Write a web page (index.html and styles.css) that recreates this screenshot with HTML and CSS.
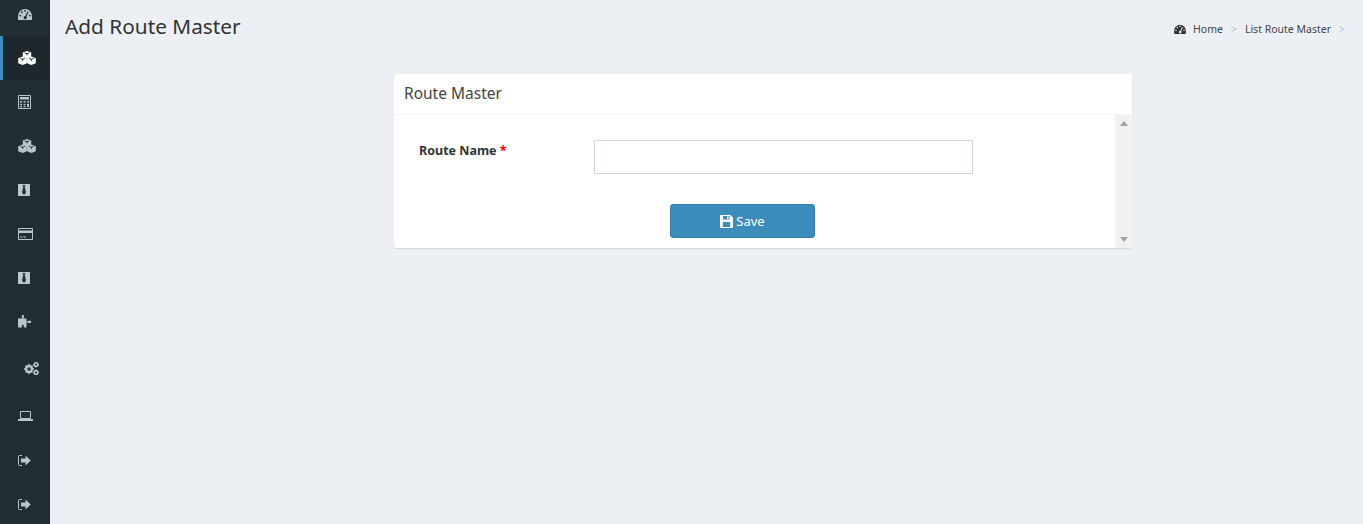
FILE: index.html
```html
<!DOCTYPE html>
<html lang="en">
<head>
<meta charset="utf-8">
<title>Add Route Master</title>
<link rel="stylesheet" href="styles.css">
</head>
<body>
<svg class="defs" width="0" height="0" aria-hidden="true">
  <symbol id="i-gauge" viewBox="0 0 14 12">
    <path fill="currentColor" d="M0 11.2V8a7 7 0 0 1 14 0v3.2a.8.8 0 0 1-.8.8H.8a.8.8 0 0 1-.8-.8z"/>
    <g class="cut"><circle cx="2.2" cy="7.6" r=".9"/><circle cx="3.8" cy="4.2" r=".9"/><circle cx="7" cy="2.8" r=".9"/><circle cx="11.8" cy="7.6" r=".9"/><path d="M9.6 3.4l1 .5-2.2 4.6a1.6 1.6 0 1 1-1.1-.5z"/></g>
  </symbol>
  <symbol id="i-cubes" viewBox="0 0 18 14">
    <g fill="currentColor"><path d="M9 0l4.200 1.500v4.200L9 7.400 4.800 5.700V1.500z"/><path d="M4.600 5.600l4.300 1.600v5.100L4.600 14 .2 12.300V7.200z"/><path d="M13.400 5.600l4.400 1.600v5.100L13.400 14 9.100 12.300V7.200z"/></g>
    <g fill="none" class="cut-line"><path d="M6.700 1.800L9 2.700l2.300-.9M9 2.700v1.600"/><path d="M2.400 7.400l2.200.9 2.200-.9M4.600 8.300v1.600"/><path d="M11.200 7.400l2.200.9 2.200-.9M13.400 8.300v1.600"/></g>
  </symbol>
  <symbol id="i-calc" viewBox="0 0 13 14">
    <path fill="none" stroke="currentColor" d="M.5.500h12v13H.5z"/>
    <path fill="currentColor" d="M2 2h9v2.500H2zM2 6h2v1.500H2zM5.500 6h2v1.500h-2zM9 6h2v1.500H9zM2 8.800h2v1.500H2zM5.500 8.800h2v1.500h-2zM9 8.800h2v3.200H9zM2 11h2v1.200H2zM5.500 11h2v1.200h-2z"/>
  </symbol>
  <symbol id="i-tie" viewBox="0 0 12 12">
    <path fill="currentColor" d="M0 0h12v12H0z"/>
    <path fill="#222d32" d="M4.700 1h2.600L6.700 3 8 8.500 6 11 4 8.500 5.300 3z"/>
  </symbol>
  <symbol id="i-card" viewBox="0 0 15 12">
    <path fill="none" stroke="currentColor" d="M.5.500h14v11H.5z"/>
    <path fill="currentColor" d="M1 2.500h13v2.500H1zM2 8.500h2.500v1H2zM5.500 8.500h2.500v1H5.500z"/>
  </symbol>
  <symbol id="i-puzzle" viewBox="0 0 13 13">
    <path fill="currentColor" d="M3.800 0h2v2.500L5.200 3.500H8.500v3h1.600V5.700H13v2.400H10.100V7.500H8.500v5H5.800V10.800a1 1 0 0 0-2 0v1.700H0V3.500h4.300L3.800 2.500z"/>
  </symbol>
  <symbol id="i-gears" viewBox="0 0 15 13">
    <g fill="none" stroke="currentColor"><circle cx="5" cy="7" r="2.900" stroke-width="2.400"/><circle cx="12" cy="2.600" r="1.800" stroke-width="1.600"/><circle cx="12" cy="10.400" r="1.800" stroke-width="1.600"/></g>
    <path fill="none" stroke="currentColor" stroke-width="1.400" d="M5 1.800V3M5 11v1.200M0 7h1.200M8.800 7H10M1.500 3.500l.8.800M7.700 9.700l.8.800M8.500 3.500l-.8.800M2.300 9.700l-.8.800M12 0v.6M12 4.600v.6M9.500 2.600h.6M14 2.600h.6M12 7.800v.6M12 12.400v.6M9.500 10.400h.6M14 10.400h.6"/>
  </symbol>
  <symbol id="i-laptop" viewBox="0 0 15 10">
    <path fill="none" stroke="currentColor" d="M2.500.500h10v7h-10z"/>
    <path fill="currentColor" d="M0 8h15v1.200a.8.800 0 0 1-.8.800H.8a.8.800 0 0 1-.8-.8z"/>
  </symbol>
  <symbol id="i-out" viewBox="0 0 13 11">
    <path fill="none" stroke="currentColor" d="M4 .500H1.500a1 1 0 0 0-1 1v8a1 1 0 0 0 1 1H4"/>
    <path fill="currentColor" d="M7.500.500L12.800 5.500 7.500 10.500V7.500H3V3.500H7.500z"/>
  </symbol>
  <symbol id="i-save" viewBox="0 0 13 13">
    <path fill="currentColor" fill-rule="evenodd" d="M1 0h9.500L13 2.500V12a1 1 0 0 1-1 1H1a1 1 0 0 1-1-1V1a1 1 0 0 1 1-1zM3 1v3.500h6.500V1zM7 1.500h1.500V4H7zM2.800 7v5h7.400V7z"/>
  </symbol>
</svg>

<div class="app">
  <nav class="sidebar">
    <a class="nav-item nav-item-first"><svg class="ico ico-gauge"><use href="#i-gauge"/></svg></a>
    <a class="nav-item nav-item-active"><svg class="ico ico-cubes"><use href="#i-cubes"/></svg></a>
    <a class="nav-item"><svg class="ico ico-calc"><use href="#i-calc"/></svg></a>
    <a class="nav-item"><svg class="ico ico-cubes"><use href="#i-cubes"/></svg></a>
    <a class="nav-item"><svg class="ico ico-tie"><use href="#i-tie"/></svg></a>
    <a class="nav-item"><svg class="ico ico-card"><use href="#i-card"/></svg></a>
    <a class="nav-item"><svg class="ico ico-tie"><use href="#i-tie"/></svg></a>
    <a class="nav-item nav-item-puzzle"><svg class="ico ico-puzzle"><use href="#i-puzzle"/></svg></a>
    <a class="nav-item nav-item-gears"><svg class="ico ico-gears"><use href="#i-gears"/></svg></a>
    <a class="nav-item nav-item-laptop"><svg class="ico ico-laptop"><use href="#i-laptop"/></svg></a>
    <a class="nav-item"><svg class="ico ico-out"><use href="#i-out"/></svg></a>
    <a class="nav-item"><svg class="ico ico-out"><use href="#i-out"/></svg></a>
  </nav>

  <main class="content">
    <header class="page-head">
      <h1 class="page-title">Add Route Master</h1>
      <ol class="crumbs">
        <li class="crumb crumb-home"><svg class="ico-crumb"><use href="#i-gauge"/></svg>Home</li>
        <li class="crumb-sep">&gt;</li>
        <li class="crumb crumb-link">List Route Master</li>
        <li class="crumb-sep">&gt;</li>
      </ol>
    </header>

    <section class="card">
      <h2 class="card-title">Route Master</h2>
      <div class="card-scroll">
        <form class="card-body">
          <div class="field">
            <label class="field-label" for="route-name">Route Name <span class="req">*</span></label>
            <input class="field-input" id="route-name" type="text">
          </div>
          <div class="actions">
            <button class="btn-save" type="button"><svg class="ico-save"><use href="#i-save"/></svg>Save</button>
          </div>
        </form>
        <div class="scrollbar">
          <span class="arrow arrow-up"></span>
          <span class="arrow arrow-down"></span>
        </div>
      </div>
    </section>
  </main>
</div>
</body>
</html>
```
FILE: styles.css
```css
* { box-sizing: border-box; }
html, body { height: 100%; }
body {
  margin: 0;
  overflow: hidden;
  background: #ecf0f5;
  color: #333;
  font-family: "Noto Sans", "Liberation Sans", sans-serif;
  font-size: 13px;
}
.defs { position: absolute; }
.app { display: flex; height: 524px; }
.cut { fill: var(--cut, #222d32); }
.cut-line { stroke: #222d32; stroke-width: 1; }

.sidebar { width: 50px; flex: none; background: #222d32; color: #b8c7ce; }
.nav-item {
  display: flex;
  align-items: center;
  height: 44px;
  padding-left: 18px;
}
.nav-item-first { height: 36px; padding-bottom: 8px; }
.nav-item-active {
  background: #1e282c;
  color: #fff;
  border-left: 3px solid #3c8dbc;
  padding-left: 15px;
}
.nav-item-puzzle { padding-bottom: 1px; }
.nav-item-gears { height: 48px; padding-left: 24px; }
.nav-item-laptop { height: 46px; padding-top: 2px; }
.ico { display: block; }
.ico-gauge { width: 14px; height: 12px; }
.ico-cubes { width: 18px; height: 14px; }
.ico-calc { width: 13px; height: 14px; }
.ico-tie { width: 12px; height: 12px; }
.ico-card { width: 15px; height: 12px; }
.ico-puzzle { width: 13px; height: 13px; }
.ico-gears { width: 15px; height: 13px; }
.ico-laptop { width: 15px; height: 10px; }
.ico-out { width: 13px; height: 11px; }

.content { flex: 1; min-width: 0; padding: 0 18px 0 15px; }
.page-head { display: flex; justify-content: space-between; height: 74px; }
.page-title { margin: 10px 0 0; font-size: 20.800px; line-height: 32px; font-weight: 400; color: #333; }
.crumbs {
  display: flex;
  align-items: center;
  list-style: none;
  margin: 0;
  padding: 0;
  height: 58px;
  font-size: 10.500px;
}
.crumb { display: flex; align-items: center; color: #444; }
.crumb-sep { color: #bbb; margin: 0 8px; }
.crumb-sep:last-child { margin-right: 0; }
.ico-crumb { --cut: #ecf0f5; width: 12px; height: 10px; margin-right: 7px; color: #333; }

.card {
  width: 738px;
  margin-left: 329px;
  background: #fff;
  border-radius: 3px;
  box-shadow: 0 1px 1px rgba(0, 0, 0, .1);
  overflow: hidden;
}
.card-title {
  margin: 0;
  height: 41px;
  padding: 0 10px;
  border-bottom: 1px solid #f4f4f4;
  font-size: 15.500px;
  line-height: 39px;
  font-weight: 400;
  color: #444;
}
.card-scroll { display: flex; height: 133px; }
.card-body { flex: 1; min-width: 0; padding: 25px 0 0 25px; }
.field { display: flex; height: 64px; }
.field-label {
  width: 175px;
  flex: none;
  padding-top: 2px;
  font-size: 12.500px;
  line-height: 17px;
  font-weight: 700;
  color: #333;
}
.req { color: #f00; }
.field-input {
  width: 379px;
  height: 34px;
  border: 1px solid #d2d6de;
  background: #fff;
  outline: 0;
}
.actions { padding-left: 251px; }
.btn-save {
  display: flex;
  align-items: center;
  justify-content: center;
  width: 145px;
  height: 34px;
  padding: 0;
  background: #3c8dbc;
  border: 1px solid #367fa9;
  border-radius: 3px;
  color: #fff;
  font-family: inherit;
  font-size: 13px;
}
.ico-save { width: 13px; height: 13px; margin-right: 3px; }

.scrollbar {
  display: flex;
  flex-direction: column;
  justify-content: space-between;
  align-items: center;
  width: 17px;
  flex: none;
  padding: 6px 0;
  background: #f1f1f1;
}
.arrow { width: 0; height: 0; border-left: 4px solid transparent; border-right: 4px solid transparent; }
.arrow-up { border-bottom: 5px solid #a3a3a3; }
.arrow-down { border-top: 5px solid #a3a3a3; }
```
